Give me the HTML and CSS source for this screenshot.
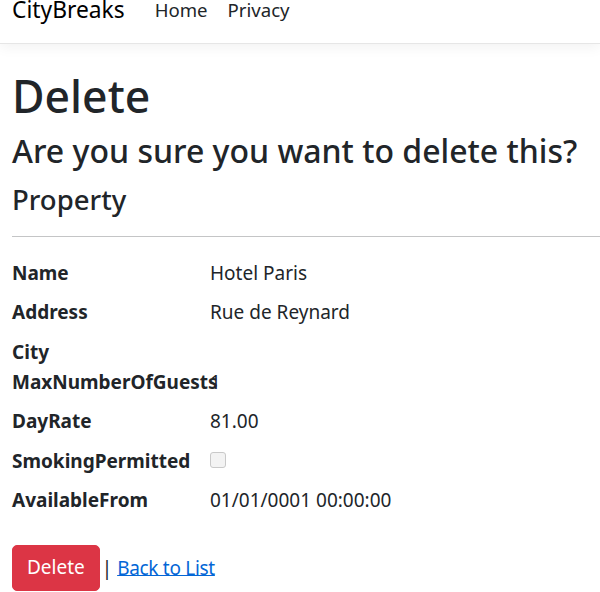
FILE: index.html
```html
<!DOCTYPE html>
<html lang="en">
<head>
<meta charset="utf-8">
<title>Delete - CityBreaks</title>
<link rel="stylesheet" href="styles.css">
</head>
<body>
<header>
  <nav class="navbar">
    <a class="brand" href="#">CityBreaks</a>
    <ul class="nav">
      <li><a class="nav-link" href="#">Home</a></li>
      <li><a class="nav-link" href="#">Privacy</a></li>
    </ul>
  </nav>
</header>
<main class="container">
  <h1 class="title">Delete</h1>
  <h3 class="question">Are you sure you want to delete this?</h3>
  <div class="details">
    <h4 class="entity">Property</h4>
    <hr class="divider">
    <dl class="fields">
      <dt>Name</dt>
      <dd>Hotel Paris</dd>
      <dt>Address</dt>
      <dd>Rue de Reynard</dd>
      <dt>City</dt>
      <dd></dd>
      <dt>MaxNumberOfGuests</dt>
      <dd>1</dd>
      <dt>DayRate</dt>
      <dd>81.00</dd>
      <dt>SmokingPermitted</dt>
      <dd><span class="check" role="checkbox" aria-checked="false" aria-disabled="true"></span></dd>
      <dt>AvailableFrom</dt>
      <dd>01/01/0001 00:00:00</dd>
    </dl>
    <form class="actions">
      <button type="button" class="btn-danger">Delete</button> | <a class="back" href="#">Back to List</a>
    </form>
  </div>
</main>
</body>
</html>
```

FILE: styles.css
```css
html, body {
  margin: 0;
  padding: 0;
}

body {
  font-family: "Segoe UI", "Noto Sans", "Open Sans", sans-serif;
  font-size: 19px;
  line-height: 30px;
  color: #212529;
  background: #fff;
  overflow: hidden;
}

.navbar {
  display: flex;
  align-items: flex-start;
  height: 43px;
  padding-left: 12px;
  border-bottom: 1px solid #e6e6e6;
  box-shadow: 0 4px 12px rgba(0, 0, 0, 0.05);
}

.brand {
  font-size: 22.8px;
  line-height: 20px;
  color: #000;
  text-decoration: none;
  margin-right: 20px;
}

.nav {
  display: flex;
  list-style: none;
  margin: 0;
  padding: 0;
}

.nav-link {
  display: block;
  font-size: 18.6px;
  line-height: 20px;
  color: #212529;
  text-decoration: none;
  padding: 0 10px;
}

.container {
  padding: 24.5px 0 0 12px;
}

.title {
  font-size: 44.5px;
  line-height: 53.4px;
  font-weight: 500;
  margin: 0 0 10.5px;
}

.question {
  font-size: 32px;
  line-height: 38.4px;
  font-weight: 500;
  margin: 0 0 11.7px;
}

.entity {
  font-size: 27.5px;
  line-height: 33px;
  font-weight: 500;
  margin: 0 0 20.4px;
}

.divider {
  border: 0;
  border-top: 1px solid #c4c5c6;
  margin: 0 0 21px;
}

.fields {
  display: grid;
  grid-template-columns: 198px 1fr;
  align-items: start;
  margin: 0 0 20px;
}

.fields dt {
  font-weight: 700;
  white-space: nowrap;
}

.fields dd {
  margin: 0 0 9.5px;
}

.check {
  display: inline-block;
  width: 14px;
  height: 14px;
  border: 1px solid #c9c9c9;
  border-radius: 3px;
  background: #f3f3f3;
  vertical-align: 0;
}

.actions {
  margin: 0;
}

.btn-danger {
  font-family: inherit;
  font-size: 19px;
  line-height: 29px;
  padding: 7.5px 14px;
  margin-right: -3px;
  color: #fff;
  background: #dc3545;
  border: 1px solid #dc3545;
  border-radius: 5px;
  cursor: pointer;
}

.back {
  color: #0366d6;
  text-decoration: underline;
  letter-spacing: -0.3px;
}
```
